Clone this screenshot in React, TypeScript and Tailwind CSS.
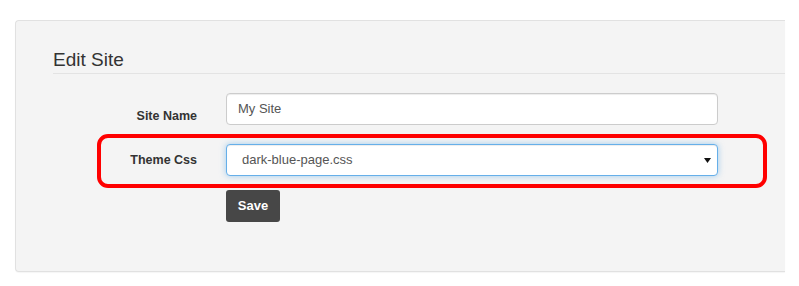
import React from "react";

export default function App() {
  return (
    <div className="min-h-[286px] bg-white pt-[20px] pl-[15px] font-['Liberation_Sans',Arial,sans-serif] text-[#333]">
      <div className="h-[252px] w-[770px] rounded-l-[4px] border border-r-0 border-[#e1e1e1] bg-[#f4f4f4] pt-[28px] shadow-[0_1px_1px_rgba(0,0,0,0.04)]">
        <h2 className="ml-[37px] border-b border-[#e3e3e3] pb-[3px] text-[19px] leading-[21px] font-normal">
          Edit Site
        </h2>

        <div className="mt-[19px] flex">
          <label className="w-[181px] pr-[0px] pt-[15px] text-right text-[12.5px] leading-[16px] font-bold">
            Site Name
          </label>
          <div className="ml-[29px] flex h-[32px] w-[492px] items-center rounded-[4px] border border-[#ccc] bg-white px-[11px] text-[13px] text-[#555] shadow-[inset_0_1px_1px_rgba(0,0,0,0.075)]">
            My Site
          </div>
        </div>

        <div className="mt-[9px] ml-[81px] flex w-[670px] items-center rounded-[11px] border-4 border-[#ff0000] pt-[6px] pb-[8px]">
          <label className="w-[96px] text-right text-[12.5px] leading-[16px] font-bold">
            Theme Css
          </label>
          <div className="ml-[29px] flex h-[32px] w-[492px] items-center justify-between rounded-[4px] border border-[#66afe9] bg-white pl-[15px] pr-[6px] text-[13px] text-[#555] shadow-[inset_0_1px_1px_rgba(0,0,0,0.075),0_0_6px_rgba(102,175,233,0.6)]">
            <span>dark-blue-page.css</span>
            <svg width="7" height="5" viewBox="0 0 7 5">
              <path d="M0 0 L7 0 L3.5 5 Z" fill="#111" />
            </svg>
          </div>
        </div>

        <div className="mt-[2px] ml-[210px]">
          <button className="h-[32px] w-[54px] rounded-[3px] bg-[#474747] text-[13px] font-bold text-white">
            Save
          </button>
        </div>
      </div>
    </div>
  );
}
